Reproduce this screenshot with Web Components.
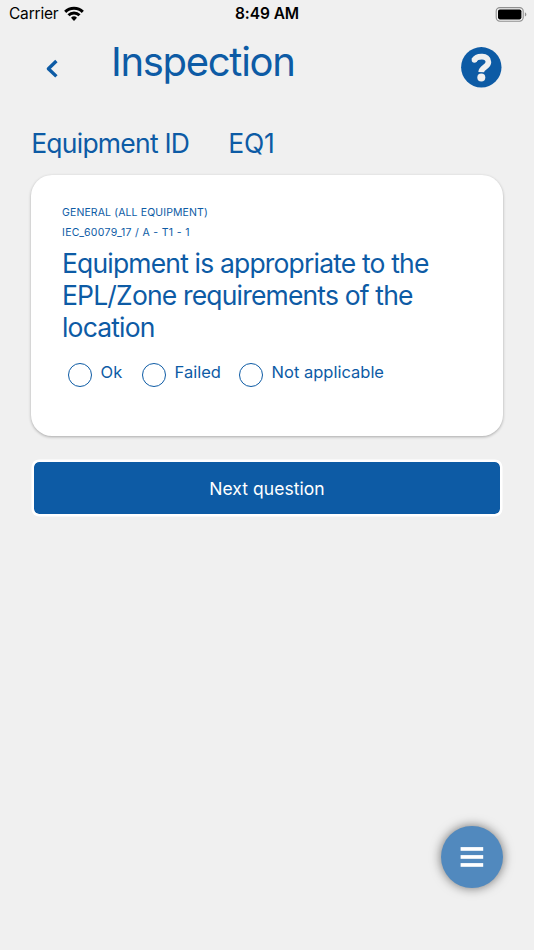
<!DOCTYPE html>
<html lang="en">
<head>
<meta charset="utf-8">
<title>Inspection</title>
<style>
  :root {
    --main: #0d5ba5;
    --fab: #5189be;
    --page: #f0f0f0;
  }
  body {
    margin: 0;
    height: 950px;
    overflow: hidden;
    background: var(--page);
    color: var(--main);
    font-family: Inter, "Liberation Sans", sans-serif;
  }
</style>
</head>
<body>
<inspection-page>
  <status-bar carrier="Carrier" time="8:49 AM"></status-bar>
  <page-header>Inspection</page-header>
  <equipment-row label="Equipment ID">EQ1</equipment-row>
  <question-card group="GENERAL (ALL EQUIPMENT)" code="IEC_60079_17 / A - T1 - 1">
    <span slot="question">Equipment is appropriate to the EPL/Zone requirements of the location</span>
    <radio-option style="width: 74px">Ok</radio-option>
    <radio-option style="width: 97px">Failed</radio-option>
    <radio-option>Not applicable</radio-option>
  </question-card>
  <main-button>Next question</main-button>
  <menu-fab></menu-fab>
</inspection-page>

<script>
class InspectionPage extends HTMLElement {
  constructor() {
    super();
    this.attachShadow({ mode: "open" });
    this.shadowRoot.innerHTML = `<style>
      :host {
        display: flex;
        flex-direction: column;
        position: relative;
        height: 950px;
      }
    </style>
    <slot></slot>`;
  }
}

class StatusBar extends HTMLElement {
  constructor() {
    super();
    this.attachShadow({ mode: "open" });
  }

  connectedCallback() {
    this.shadowRoot.innerHTML = `<style>
      :host {
        display: grid;
        grid-template-columns: 1fr auto 1fr;
        align-items: center;
        height: 27px;
        padding: 0 7px 0 9px;
        color: #000;
        font-size: 15.5px;
        line-height: 28px;
      }
      .left {
        display: flex;
        align-items: center;
        gap: 6px;
        letter-spacing: -0.2px;
      }
      .left svg {
        margin-bottom: 2px;
      }
      .time {
        margin-right: 2px;
        font-weight: 600;
        letter-spacing: -0.05px;
      }
      .battery {
        justify-self: end;
      }
      svg {
        display: block;
      }
    </style>
    <div class="left">
      <span>${this.getAttribute("carrier")}</span>
      <svg width="20" height="15" viewBox="0 0 20 15" fill="none" stroke="#000" stroke-width="3">
        <path d="M1.2 5.9a12.4 12.4 0 0 1 17.6 0"/>
        <path d="M4.5 9.3a7.8 7.8 0 0 1 11 0"/>
        <path d="M10 14.9l-3-3.1a4.3 4.3 0 0 1 6 0z" fill="#000" stroke="none"/>
      </svg>
    </div>
    <span class="time">${this.getAttribute("time")}</span>
    <svg class="battery" width="32" height="15" viewBox="0 0 32 15">
      <rect x="1.2" y="0.6" width="27" height="13.6" rx="3.6" fill="none" stroke="#909090" stroke-width="1.1"/>
      <rect x="3" y="2.4" width="23.4" height="10" rx="1.8"/>
      <path d="M29.9 5.2c2 .8 2 3.6 0 4.4z" fill="#909090"/>
    </svg>`;
  }
}

class PageHeader extends HTMLElement {
  constructor() {
    super();
    this.attachShadow({ mode: "open" });
    this.shadowRoot.innerHTML = `<style>
      :host {
        display: flex;
        align-items: flex-start;
        height: 84px;
        padding: 0 32px 0 45px;
      }
      .back {
        margin: 32px 51px 0 0;
      }
      h1 {
        flex: 1;
        margin: 11px 0 0 1px;
        font-size: 40px;
        font-weight: 400;
        line-height: 48px;
        letter-spacing: -1.3px;
      }
      .help {
        margin-top: 20px;
      }
      svg {
        display: block;
      }
    </style>
    <svg class="back" width="14" height="20" viewBox="0 0 14 20" fill="none" stroke="currentColor" stroke-width="3.4" stroke-linejoin="round">
      <path d="M11.4 2L3.4 9.7l8 7.7"/>
    </svg>
    <h1><slot></slot></h1>
    <svg class="help" width="41" height="41" viewBox="0 0 41 41">
      <circle cx="20.3" cy="20.3" r="20.2" fill="currentColor"/>
      <path d="M12.8 13.4C16 8.2 27.4 8.1 27.4 14.9c0 5.4-7 4.8-7.2 10.2" fill="none" stroke="var(--page)" stroke-width="5.7"/>
      <circle cx="13.4" cy="13.1" r="2.7" fill="var(--page)"/>
      <circle cx="20.3" cy="30.6" r="4" fill="var(--page)"/>
    </svg>`;
  }
}

class EquipmentRow extends HTMLElement {
  constructor() {
    super();
    this.attachShadow({ mode: "open" });
  }

  connectedCallback() {
    this.shadowRoot.innerHTML = `<style>
      :host {
        display: grid;
        grid-template-columns: 197px 1fr;
        height: 64px;
        padding-left: 31.2px;
        font-size: 26.5px;
        line-height: 64px;
      }
      .label {
        letter-spacing: -0.76px;
      }
      .value {
        letter-spacing: -0.2px;
      }
    </style>
    <span class="label">${this.getAttribute("label")}</span>
    <span class="value"><slot></slot></span>`;
  }
}

class QuestionCard extends HTMLElement {
  constructor() {
    super();
    this.attachShadow({ mode: "open" });
  }

  connectedCallback() {
    this.shadowRoot.innerHTML = `<style>
      :host {
        display: block;
        box-sizing: border-box;
        height: 261px;
        margin: 0 31px;
        padding: 28px 31px 0;
        background: #fff;
        border-radius: 21px;
        box-shadow: 0 1px 3px rgba(0, 0, 0, 0.3);
      }
      .meta {
        font-size: 10.5px;
        line-height: 20px;
        letter-spacing: 0.12px;
      }
      .code {
        letter-spacing: 0.32px;
      }
      .question {
        width: 380px;
        margin-top: 4px;
        font-size: 26.5px;
        line-height: 32px;
        letter-spacing: -0.83px;
      }
      .options {
        display: flex;
        margin: 18px 0 0 6px;
      }
    </style>
    <div class="meta">${this.getAttribute("group")}</div>
    <div class="meta code">${this.getAttribute("code")}</div>
    <div class="question"><slot name="question"></slot></div>
    <div class="options"><slot></slot></div>`;
  }
}

class RadioOption extends HTMLElement {
  constructor() {
    super();
    this.attachShadow({ mode: "open" });
    this.shadowRoot.innerHTML = `<style>
      :host {
        display: flex;
        align-items: flex-start;
        gap: 8.6px;
        font-size: 16.5px;
        line-height: 22px;
        white-space: nowrap;
        cursor: pointer;
      }
      .circle {
        box-sizing: border-box;
        width: 24px;
        height: 24px;
        margin-top: 2px;
        border: 1.5px solid var(--main);
        border-radius: 50%;
      }
    </style>
    <span class="circle"></span>
    <span><slot></slot></span>`;
  }
}

class MainButton extends HTMLElement {
  constructor() {
    super();
    this.attachShadow({ mode: "open" });
    this.shadowRoot.innerHTML = `<style>
      :host {
        display: block;
        margin: 24px 32px 0;
      }
      button {
        display: block;
        width: 100%;
        height: 56px;
        padding: 0;
        border: 2px solid #fff;
        border-radius: 7px;
        background: var(--main);
        background-clip: padding-box;
        box-shadow: 0 0 0 0.5px #fff;
        color: #fff;
        font: inherit;
        font-size: 17.5px;
        letter-spacing: 0.05px;
      }
    </style>
    <button><slot></slot></button>`;
  }
}

class MenuFab extends HTMLElement {
  constructor() {
    super();
    this.attachShadow({ mode: "open" });
    this.shadowRoot.innerHTML = `<style>
      :host {
        position: absolute;
        right: 31px;
        bottom: 62px;
        display: flex;
        align-items: center;
        justify-content: center;
        width: 62px;
        height: 62px;
        border-radius: 50%;
        background: var(--fab);
        box-shadow: 0 0 11px rgba(0, 0, 0, 0.55);
      }
      svg {
        display: block;
      }
    </style>
    <svg width="24" height="22" viewBox="0 0 24 22" fill="#fff">
      <rect x="0.6" y="1.1" width="22.6" height="3.7"/>
      <rect x="0.6" y="9.1" width="22.6" height="3.7"/>
      <rect x="0.6" y="17.1" width="22.6" height="3.7"/>
    </svg>`;
  }
}

customElements.define("inspection-page", InspectionPage);
customElements.define("status-bar", StatusBar);
customElements.define("page-header", PageHeader);
customElements.define("equipment-row", EquipmentRow);
customElements.define("question-card", QuestionCard);
customElements.define("radio-option", RadioOption);
customElements.define("main-button", MainButton);
customElements.define("menu-fab", MenuFab);
</script>
</body>
</html>
